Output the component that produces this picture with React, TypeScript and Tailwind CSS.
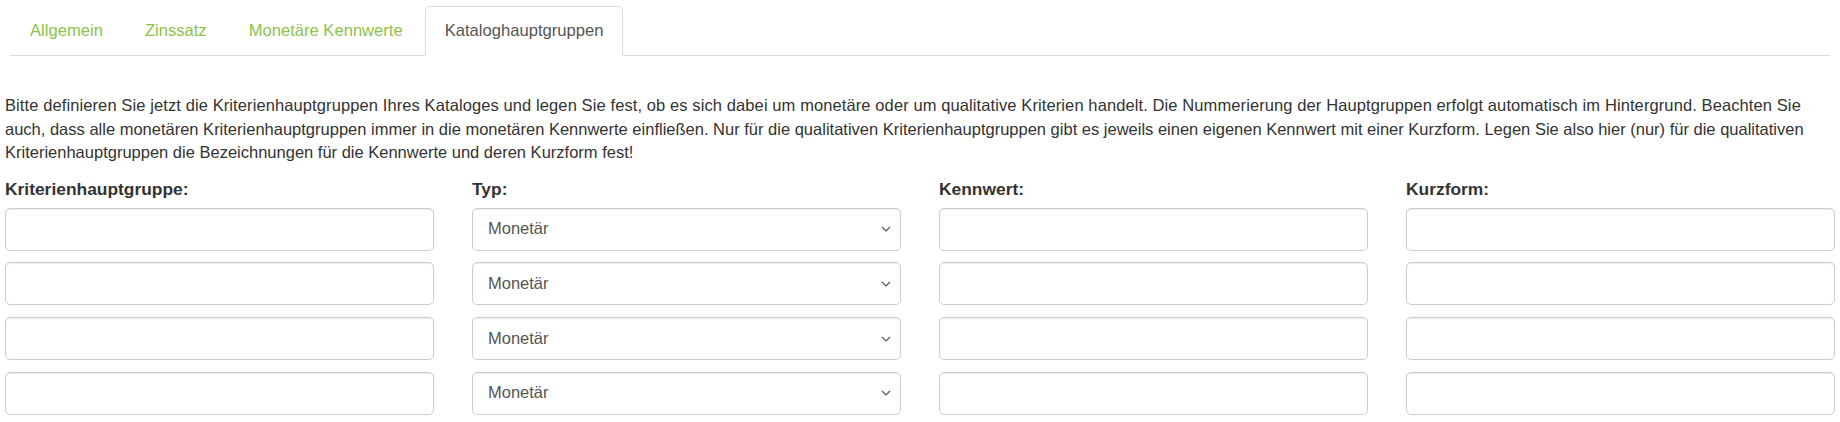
import React from "react";

const tabs = ["Allgemein", "Zinssatz", "Monetäre Kennwerte", "Kataloghauptgruppen"];
const headers = ["Kriterienhauptgruppe:", "Typ:", "Kennwert:", "Kurzform:"];

function TextInput() {
  return (
    <input
      type="text"
      className="block w-full h-[43px] rounded-[5px] border border-[#cccccc] bg-white px-[15px] text-[16.5px] text-[#555555] shadow-[inset_0_1px_1px_rgba(0,0,0,0.075)] outline-none"
    />
  );
}

function SelectInput() {
  return (
    <div className="relative">
      <select
        defaultValue="m"
        className="block w-full h-[43px] appearance-none rounded-[5px] border border-[#cccccc] bg-white pl-[15px] pr-[30px] text-[16.5px] text-[#555555] shadow-[inset_0_1px_1px_rgba(0,0,0,0.075)] outline-none"
        style={{ fontFamily: '"Liberation Sans", Arial, sans-serif' }}
      >
        <option value="m">Monetär</option>
        <option value="q">Qualitativ</option>
      </select>
      <svg
        className="pointer-events-none absolute right-[10px] top-1/2 -translate-y-1/2"
        width="10"
        height="6"
        viewBox="0 0 10 6"
        fill="none"
      >
        <path d="M1 1L5 5L9 1" stroke="#555555" strokeWidth="1.2" />
      </svg>
    </div>
  );
}

export default function App() {
  return (
    <div
      className="w-[1840px] h-[422px] overflow-hidden bg-white text-[#333333] text-[16.5px] leading-[23.57px]"
      style={{ fontFamily: '"Liberation Sans", Arial, sans-serif' }}
    >
      <ul className="mx-[10px] mt-[6px] flex border-b border-[#dddddd] text-[16.6px]">
        {tabs.map((t, i) => {
          const active = i === tabs.length - 1;
          return (
            <li key={t} className="mb-[-1px] mr-[2px]">
              <a
                className={
                  active
                    ? "block rounded-t-[5px] border border-[#dddddd] border-b-transparent bg-white px-[19px] py-[12.2px] text-[#555555]"
                    : "block rounded-t-[5px] border border-transparent px-[19px] py-[12.2px] text-[#8cc34b]"
                }
              >
                {t}
              </a>
            </li>
          );
        })}
      </ul>

      <div className="px-[5px]">
        <p className="mt-[38px] mb-[13.5px] whitespace-nowrap">
          <span className="tracking-[0.1px]">
            Bitte definieren Sie jetzt die Kriterienhauptgruppen Ihres Kataloges und legen Sie fest, ob es sich dabei um monetäre oder um qualitative Kriterien handelt. Die Nummerierung der Hauptgruppen erfolgt automatisch im Hintergrund. Beachten Sie
          </span>
          <br />
          auch, dass alle monetären Kriterienhauptgruppen immer in die monetären Kennwerte einfließen. Nur für die qualitativen Kriterienhauptgruppen gibt es jeweils einen eigenen Kennwert mit einer Kurzform. Legen Sie also hier (nur) für die qualitativen
          <br />
          Kriterienhauptgruppen die Bezeichnungen für die Kennwerte und deren Kurzform fest!
        </p>

        <div className="grid grid-cols-4 gap-x-[38px]">
          {headers.map((h) => (
            <label key={h} className="mb-[6px] block text-[17.4px] font-bold text-[#333333]">
              {h}
            </label>
          ))}
        </div>

        <div className="flex flex-col gap-[11.7px]">
          {[0, 1, 2, 3].map((r) => (
            <div key={r} className="grid grid-cols-4 gap-x-[38px]">
              <TextInput />
              <SelectInput />
              <TextInput />
              <TextInput />
            </div>
          ))}
        </div>
      </div>
    </div>
  );
}
